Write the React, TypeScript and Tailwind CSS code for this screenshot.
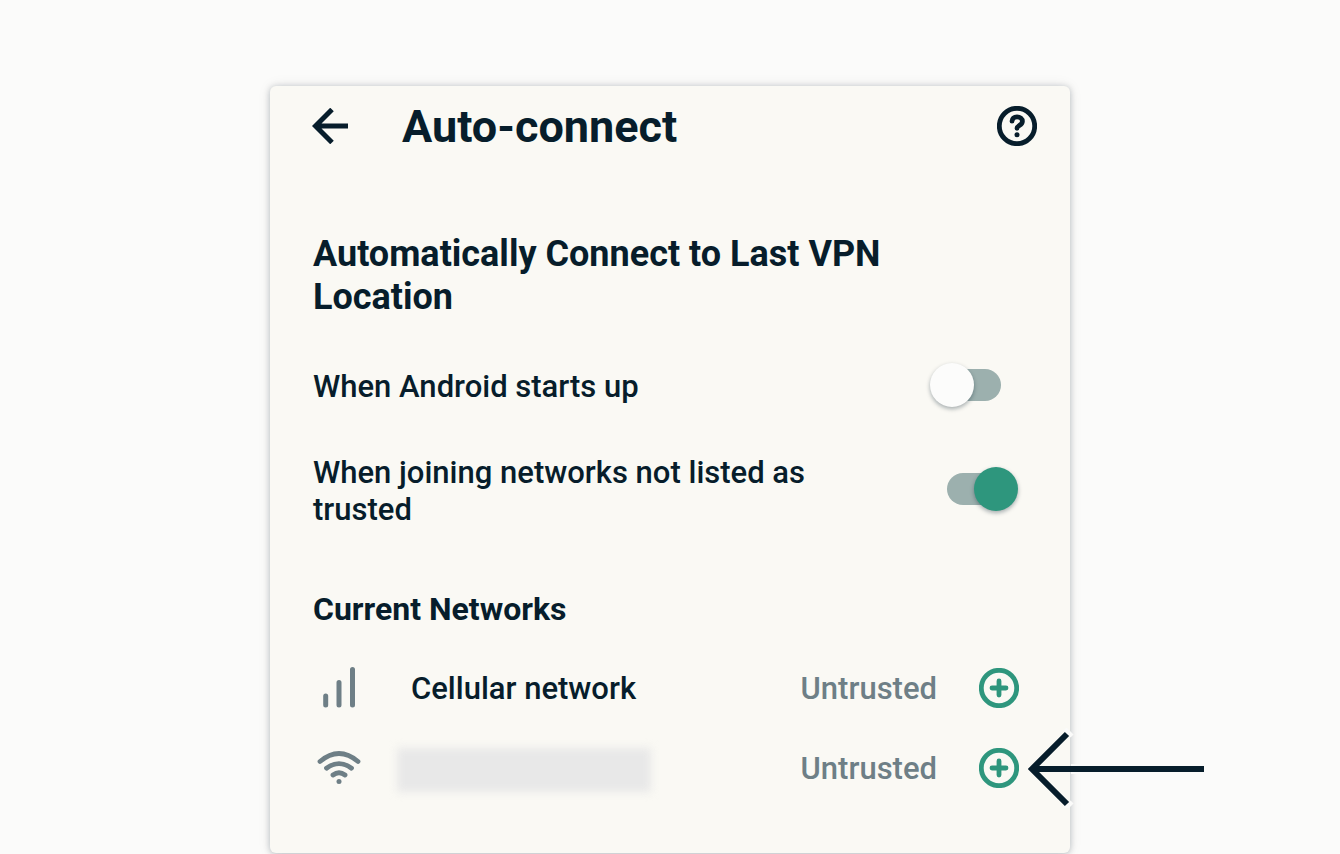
import { useState } from "react";

const networks = [
  { id: "cellular", name: "Cellular network", status: "Untrusted" },
  { id: "wifi", name: "", status: "Untrusted" },
];

function BackIcon() {
  return (
    <svg
      className="h-9 w-9"
      viewBox="0 0 36 36"
      fill="none"
      stroke="currentColor"
      strokeWidth={5}
    >
      <path d="M36 18H4M20 1.500L3.500 18 20 34.500" />
    </svg>
  );
}

function HelpIcon() {
  return (
    <svg
      className="h-10 w-10"
      viewBox="0 0 40 40"
      fill="none"
      stroke="currentColor"
      strokeWidth={4.8}
    >
      <circle cx="20" cy="20" r="17.7" />
      <path
        strokeLinecap="round"
        d="M15 15.200C15 12.500 17 10.800 20 10.800s5.400 1.900 5.400 4.500C25.400 18 23.500 18.800 22 19.700C20.500 20.600 20 21.200 20 22.300"
      />
      <circle cx="20" cy="28.700" r="2.500" fill="currentColor" stroke="none" />
    </svg>
  );
}

function SignalIcon() {
  return (
    <svg
      className="h-12 w-12"
      viewBox="0 0 48 48"
      fill="none"
      stroke="currentColor"
      strokeWidth={5}
      strokeLinecap="round"
    >
      <path d="M10.700 32v9M24 18.500V41M37.500 5.500V41" />
    </svg>
  );
}

function WifiIcon() {
  return (
    <svg
      className="h-12 w-12"
      viewBox="0 0 48 48"
      fill="none"
      stroke="currentColor"
      strokeWidth={4.8}
      strokeLinecap="round"
    >
      <path d="M5 17.500Q24 1.500 43 17.500M11.500 24.200Q24 15 36.500 24.200M18 31Q24 26.500 30 31" />
      <circle cx="24" cy="37.500" r="2.500" fill="currentColor" stroke="none" />
    </svg>
  );
}

function AddIcon() {
  return (
    <svg
      className="h-10 w-10"
      viewBox="0 0 40 40"
      fill="none"
      stroke="currentColor"
      strokeWidth={4.8}
    >
      <circle cx="20" cy="20" r="17.7" />
      <path strokeLinecap="round" d="M20 13v14M13 20h14" />
    </svg>
  );
}

function Pointer() {
  return (
    <svg
      className="pointer-events-none absolute top-0 left-full -ml-[43px] h-20 w-[180px]"
      viewBox="0 0 180 80"
      fill="none"
    >
      {/* light edge keeps the arrow clear of the card shadow */}
      <path d="M177 41H44M43 3l-3 3M43 79l-3-3" stroke="#fbfbfa" strokeWidth={10} />
      <path d="M177 41H6M40 6L5 41l35 35" stroke="#071d2b" strokeWidth={6} />
    </svg>
  );
}

function Switch({
  id,
  checked,
  onChange,
}: {
  id: string;
  checked: boolean;
  onChange: (checked: boolean) => void;
}) {
  return (
    <input
      id={id}
      type="checkbox"
      role="switch"
      checked={checked}
      onChange={(e) => onChange(e.target.checked)}
      className="relative h-11 w-[90px] shrink-0 cursor-pointer appearance-none before:absolute before:inset-x-[18px] before:inset-y-[6px] before:rounded-full before:bg-[#9cb0ae] after:absolute after:top-0 after:left-px after:h-11 after:w-11 after:rounded-full after:bg-[#fcfcfb] after:shadow-[0_2px_4px_rgba(7,29,43,0.35)] checked:after:right-px checked:after:left-auto checked:after:bg-[#2e967d]"
    />
  );
}

export default function App() {
  const [startup, setStartup] = useState(false);
  const [joining, setJoining] = useState(true);

  return (
    <div className="min-h-screen overflow-x-hidden bg-[#fbfbfa] pt-[86px] pb-px font-['Roboto',sans-serif] text-[#071d2b]">
      <main className="mx-auto max-w-[800px] rounded-md bg-[#faf9f4] pb-[45px] shadow-[0_1px_6px_rgba(7,29,43,0.25),0_0_14px_rgba(7,29,43,0.08)]">
        {/* App bar */}
        <header className="flex h-20 items-center pr-[33px] pl-[42px]">
          <button type="button" aria-label="Back">
            <BackIcon />
          </button>
          <h1 className="ml-[54px] flex-1 text-[45px] leading-[53px] font-bold">
            Auto-connect
          </h1>
          <button type="button" aria-label="Help">
            <HelpIcon />
          </button>
        </header>

        {/* Auto-connect settings */}
        <section className="pt-[67px] pr-[51px] pl-[43px]">
          <h2 className="max-w-[600px] text-[36px] leading-[43px] font-bold">
            Automatically Connect to Last VPN Location
          </h2>
          <div className="mt-[14px] flex h-[104px] items-center justify-between">
            <label
              htmlFor="startup"
              className="pt-[2px] text-[31px] leading-[37px] font-medium"
            >
              When Android starts up
            </label>
            <Switch id="startup" checked={startup} onChange={setStartup} />
          </div>
          <div className="flex h-[104px] items-center justify-between">
            <label
              htmlFor="joining"
              className="max-w-[540px] pt-[4px] text-[31px] leading-[37px] font-medium"
            >
              When joining networks not listed as trusted
            </label>
            <Switch id="joining" checked={joining} onChange={setJoining} />
          </div>
        </section>

        {/* Networks */}
        <section className="pt-[50px]">
          <h3 className="mb-5 pl-[43px] text-[32px] leading-[37px] font-bold">
            Current Networks
          </h3>
          <ul>
            {networks.map((network) => (
              <li
                key={network.id}
                className="relative flex h-20 items-center pr-[51px] pl-[45px]"
              >
                <span className="text-[#6e7f86]">
                  {network.id === "wifi" ? <WifiIcon /> : <SignalIcon />}
                </span>
                {network.name ? (
                  <span className="ml-12 text-[31px] leading-[37px] font-medium">
                    {network.name}
                  </span>
                ) : (
                  <span className="mt-1 ml-[34px] h-11 w-[254px] bg-[#e8e8e8] blur-[4px]" />
                )}
                <span className="ml-auto text-[31px] leading-[37px] font-medium text-[#6e7f86]">
                  {network.status}
                </span>
                <button
                  type="button"
                  aria-label={`Trust ${network.name || "Wi-Fi network"}`}
                  className="ml-[42px] text-[#2e967d]"
                >
                  <AddIcon />
                </button>
                {network.id === "wifi" && <Pointer />}
              </li>
            ))}
          </ul>
        </section>
      </main>
    </div>
  );
}
